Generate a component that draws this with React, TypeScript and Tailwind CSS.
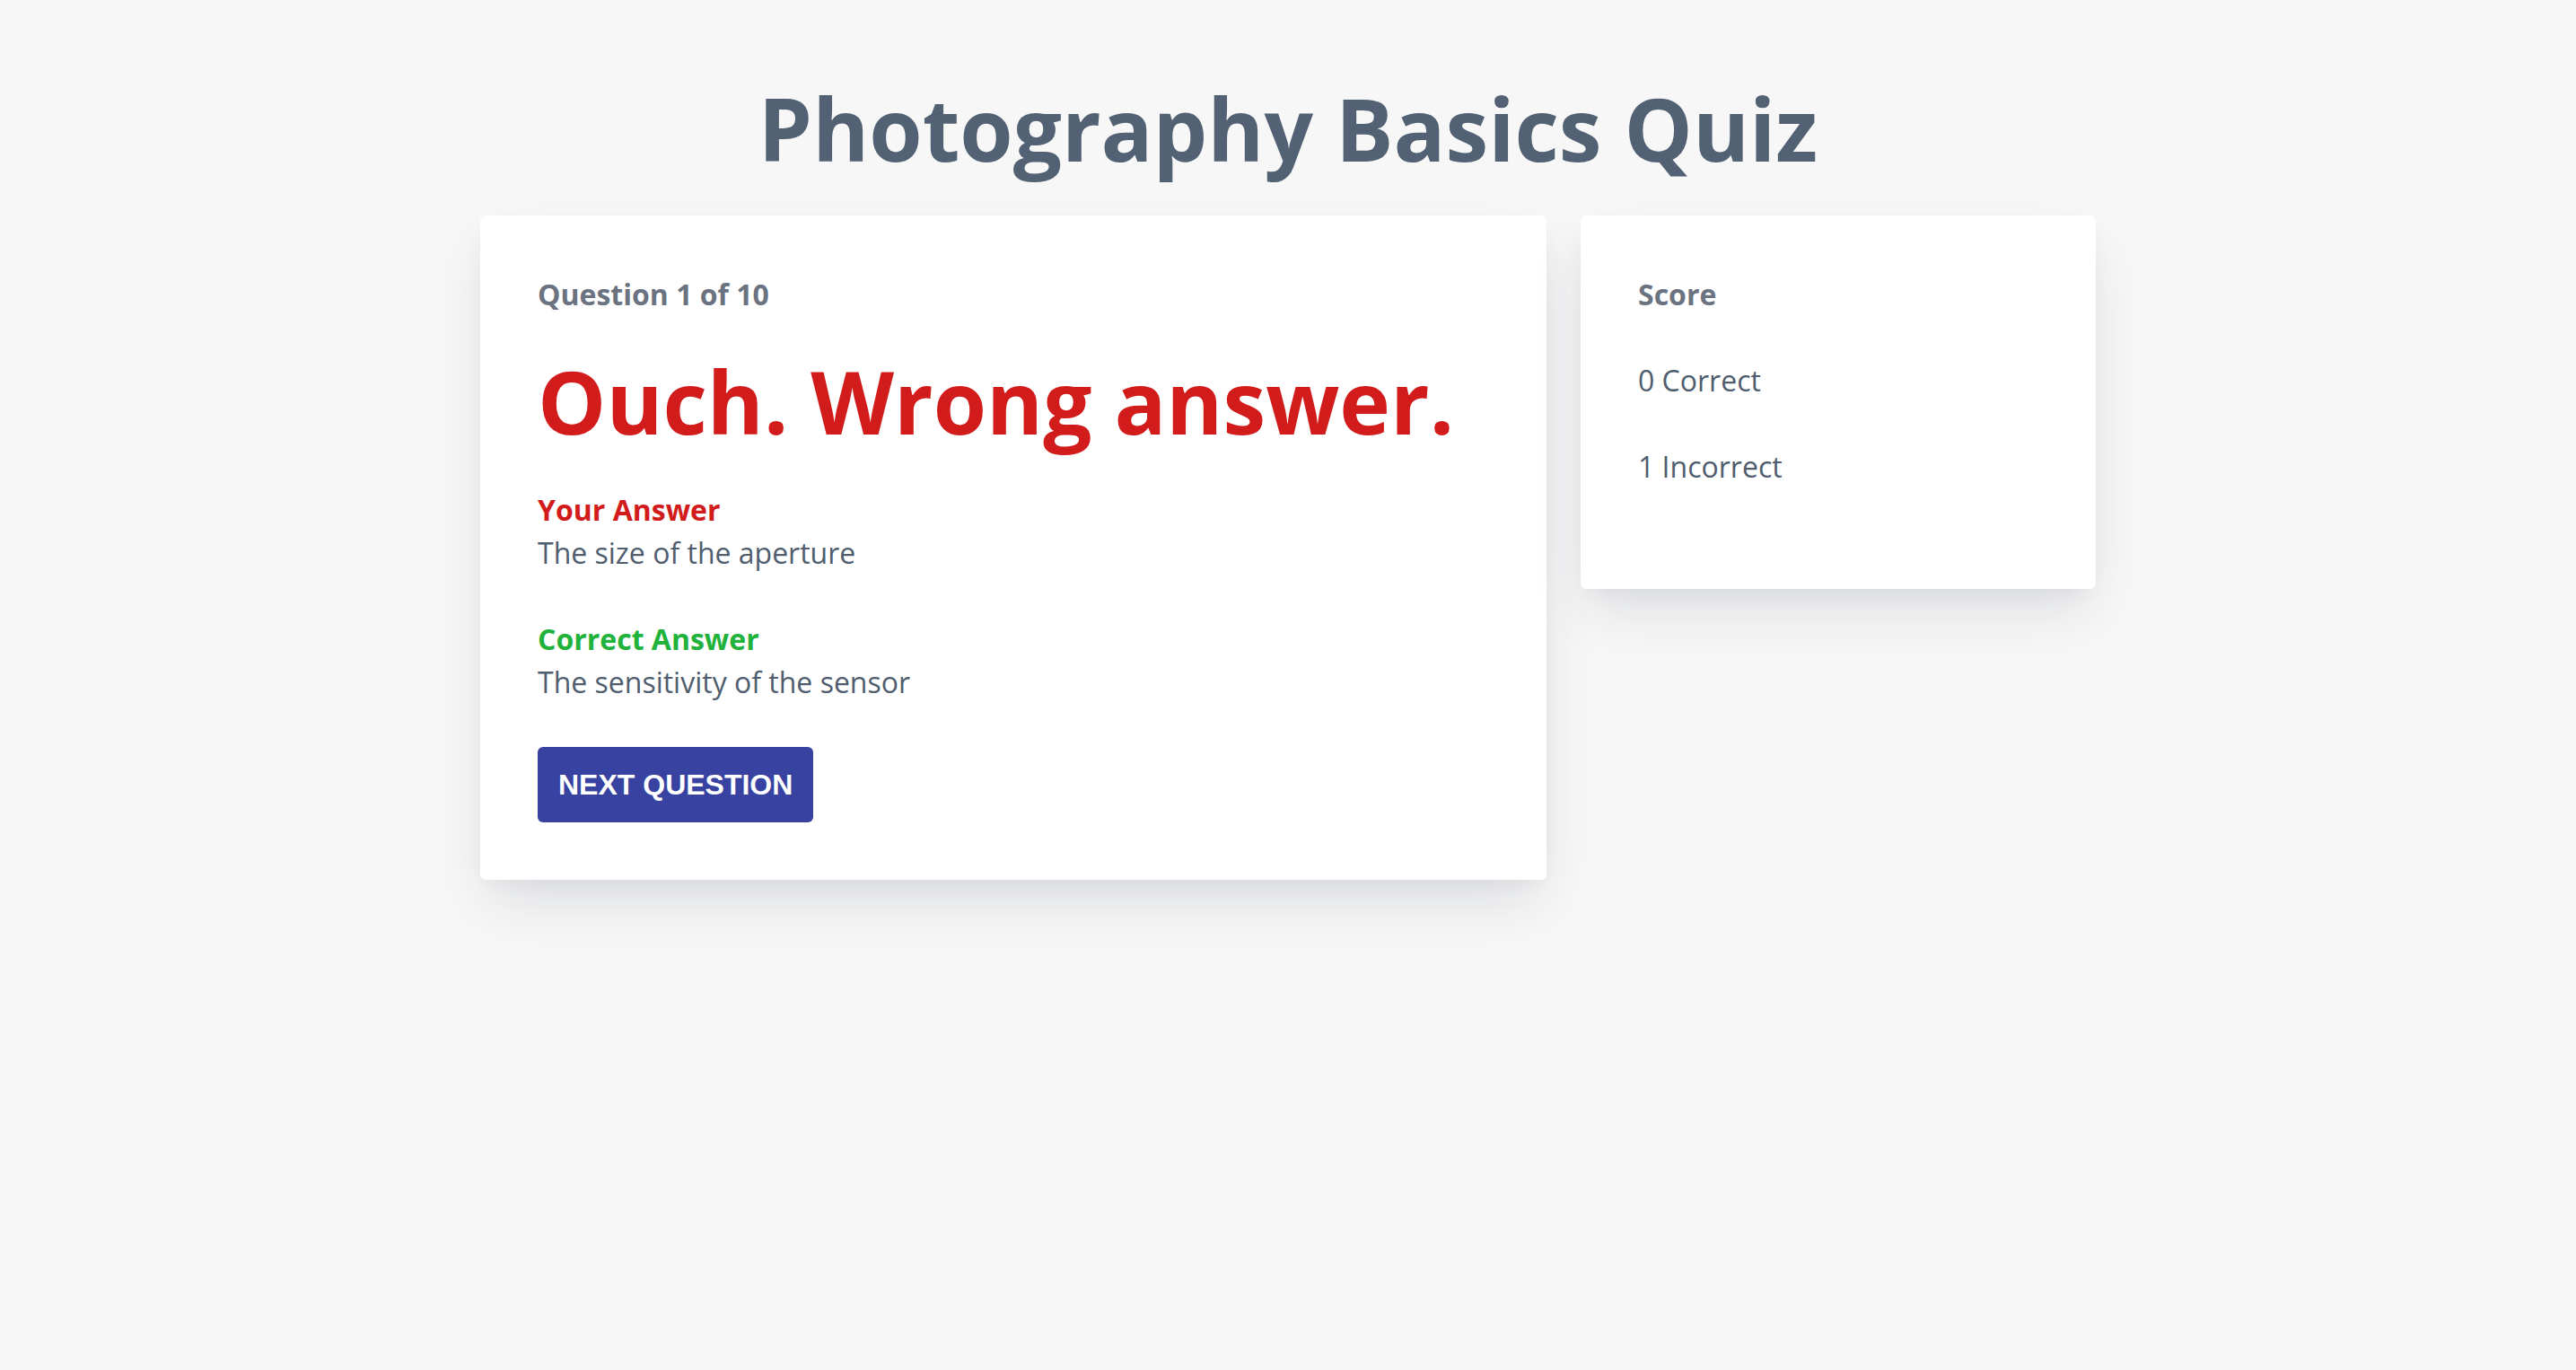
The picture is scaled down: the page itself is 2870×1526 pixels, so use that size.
import React from "react";

export default function App() {
  const cardShadow =
    "shadow-[0_30px_60px_-10px_rgba(30,41,59,0.13),0_8px_24px_-8px_rgba(30,41,59,0.06)]";
  return (
    <div
      className="min-h-screen w-full bg-[#f7f7f7] pt-[95px]"
      style={{ fontFamily: '"Open Sans", "Noto Sans", sans-serif' }}
    >
      <h1 className="text-center text-[96px] font-bold leading-[96px] text-[#526173] tracking-[0px]">
        Photography Basics Quiz
      </h1>
      <div className="mx-auto mt-[49px] flex w-[1800px] items-start gap-[38px]">
        <div className={`w-[1188px] rounded-[6px] bg-white p-[64px] ${cardShadow}`}>
          <div className="text-[32px] font-bold leading-[48px] text-[#6b7280]">
            Question 1 of 10
          </div>
          <h2 className="mt-[37px] text-[96px] font-bold leading-[115px] text-[#d21b1b]">
            Ouch. Wrong answer.
          </h2>
          <div className="mt-[40px] mb-[48px]">
            <div className="text-[32px] font-bold leading-[48px] text-[#d21b1b]">
              Your Answer
            </div>
            <div className="text-[32px] leading-[48px] text-[#4f5d6e]">
              The size of the aperture
            </div>
          </div>
          <div className="mb-[48px]">
            <div className="text-[32px] font-bold leading-[48px] text-[#20b23a]">
              Correct Answer
            </div>
            <div className="text-[32px] leading-[48px] text-[#4f5d6e]">
              The sensitivity of the sensor
            </div>
          </div>
          <button
            className="flex h-[84px] items-center rounded-[6px] bg-[#3842a1] px-[23px] text-[32px] font-bold uppercase text-white"
            style={{ fontFamily: '"Liberation Sans", Arial, sans-serif' }}
          >
            Next Question
          </button>
        </div>
        <div className={`w-[574px] rounded-[6px] bg-white px-[64px] pt-[64px] pb-[64px] ${cardShadow}`}>
          <div className="mb-[48px] text-[32px] font-bold leading-[48px] text-[#6b7280]">
            Score
          </div>
          <div className="mb-[48px] text-[32px] leading-[48px] text-[#4f5d6e]">0 Correct</div>
          <div className="mb-[48px] text-[32px] leading-[48px] text-[#4f5d6e]">1 Incorrect</div>
        </div>
      </div>
    </div>
  );
}
